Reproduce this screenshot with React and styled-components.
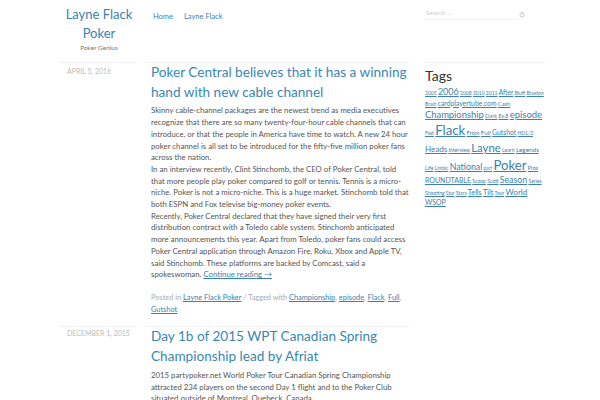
import React from 'react'
import styled, { createGlobalStyle } from 'styled-components'

const GlobalStyle = createGlobalStyle`
  body {
    margin: 0;
    background: #fff;
    font-family: Lato, "Open Sans", sans-serif;
    color: #555;
  }
  a { color: #3b80ae; }
`

const Page = styled.div`
  display: flex;
  width: 600px;
  height: 400px;
  overflow: hidden;
  padding-left: 60px;
  box-sizing: border-box;
`

const MainArea = styled.div`
  width: 350px;
  flex-shrink: 0;
  display: flex;
  flex-direction: column;
`

const Row = styled.div`
  display: flex;
  gap: 8px;
`

const SideCol = styled.div`
  width: 78px;
  flex-shrink: 0;
  box-sizing: border-box;
  border-top: ${(p) => (p.$line ? '1px solid #f1f1f1' : 'none')};
`

const ContentCol = styled.div`
  flex: 1;
  box-sizing: border-box;
  padding: 0 1px 0 5px;
  border-top: ${(p) => (p.$line ? '1px solid #f1f1f1' : 'none')};
`

const Branding = styled.div`
  height: 62px;
  text-align: center;
  padding-top: 5px;
  box-sizing: border-box;
`

const SiteTitle = styled.a`
  display: block;
  font-size: 13px;
  line-height: 19px;
  color: #3b80ae;
  text-decoration: none;
`

const Tagline = styled.div`
  font-size: 6.5px;
  line-height: 8px;
  color: #777;
  margin-top: 1px;
`

const Nav = styled.nav`
  display: flex;
  gap: 11px;
  padding-top: 12px;
  padding-left: 2px;
`

const NavLink = styled.a`
  font-size: 7.5px;
  color: #3b80ae;
  text-decoration: none;
`

const PostDate = styled.div`
  font-size: 7px;
  line-height: 8px;
  color: #bbb;
  text-transform: uppercase;
  padding-top: ${(p) => p.$top}px;
  padding-left: 7px;
`

const PostTitle = styled.h2`
  margin: 0;
  font-weight: 400;
  font-size: 13.6px;
  line-height: 19.7px;
  color: #3a86b4;
`

const Body = styled.div`
  margin-top: ${(p) => p.$top}px;
  font-size: 7.8px;
  line-height: 11.7px;
  color: #555;
  p { margin: 0; }
  a { text-decoration: underline; }
`

const Meta = styled.div`
  margin-top: 11.5px;
  padding-bottom: 11px;
  font-size: 7.4px;
  line-height: 11.5px;
  color: #aaa;
`

const Sidebar = styled.aside`
  width: 121px;
  margin-left: 15px;
  display: flex;
  flex-direction: column;
`

const SearchBox = styled.div`
  height: 62px;
  padding-top: 8px;
  box-sizing: border-box;
`

const SearchField = styled.div`
  display: flex;
  align-items: center;
  justify-content: space-between;
  width: 100px;
`

const SearchInput = styled.div`
  width: 91px;
  font-size: 6.5px;
  color: #ccc;
  padding: 1px 1px 3px;
  border-bottom: 1px solid #f0f0f0;
`

const Widget = styled.div`
  border-top: 1px solid #f1f1f1;
`

const WidgetTitle = styled.h3`
  margin: 0;
  padding-top: 4px;
  font-weight: 400;
  font-size: 14px;
  line-height: 18px;
  color: #333;
`

const TagCloud = styled.div`
  font-size: 5px;
  line-height: 1.4;
  margin-top: 1px;
`

const Tag = styled.a`
  font-size: ${(p) => p.$size}px;
  color: #3b80ae;
  text-decoration: underline;
`

const tags = [
  ['2005', 5], ['2006', 9], ['2008', 5], ['2010', 5], ['2011', 5], ['After', 6.6], ['Bluff', 5], ['Braxton', 5],
  ['Brain', 5], ['cardplayertube.com', 6.8], ['Cash', 5.8],
  ['Championship', 9.4], ['Dark', 5.8], ['Ev.8', 5.3], ['episode', 9.5],
  ['Fast', 5], ['Flack', 13.2], ['From', 5.8], ['Full', 6.4], ['Gutshot', 6.8], ['HD1/3', 5],
  ['Heads', 8], ['Interview', 5.2], ['Layne', 11.4], ['Learn', 5.2], ['Legends', 6.4],
  ['Life', 5.2], ['Limbic', 4.8], ['National', 8.8], ['part', 4.8], ['Poker', 13.2], ['Pros', 5.3],
  ['ROUNDTABLE', 7], ['Scoop', 5], ['Scott', 5], ['Season', 8.8], ['Series', 5],
  ['Shooting', 5], ['Star', 5], ['Stars', 5], ['Tells', 7.3], ['Tilt', 7.3], ['Tour', 5], ['World', 8],
  ['WSOP', 7],
]

const SearchIcon = () => (
  <svg width="6" height="7" viewBox="0 0 12 14" fill="none" stroke="#bbb" strokeWidth="1.6">
    <circle cx="6" cy="8" r="4" />
    <path d="M6 1v3" />
  </svg>
)

export default function App() {
  return (
    <>
      <GlobalStyle />
      <Page>
        <MainArea>
          <Row>
            <SideCol>
              <Branding>
                <SiteTitle href="#">Layne Flack Poker</SiteTitle>
                <Tagline>Poker Genius</Tagline>
              </Branding>
            </SideCol>
            <ContentCol>
              <Nav>
                <NavLink href="#">Home</NavLink>
                <NavLink href="#">Layne Flack</NavLink>
              </Nav>
            </ContentCol>
          </Row>

          <Row>
            <SideCol $line>
              <PostDate $top={4}>April 5, 2016</PostDate>
            </SideCol>
            <ContentCol $line>
              <PostTitle>Poker Central believes that it has a winning hand with new cable channel</PostTitle>
              <Body $top={3}>
                <p>
                  Skinny cable-channel packages are the newest trend as media executives recognize that there are so
                  many twenty-four-hour cable channels that can introduce, or that the people in America have time to
                  watch. A new 24 hour poker channel is all set to be introduced for the fifty-five million poker fans
                  across the nation.
                </p>
                <p>
                  In an interview recently, Clint Stinchomb, the CEO of Poker Central, told that more people play poker
                  compared to golf or tennis. Tennis is a micro-niche. Poker is not a micro-niche. This is a huge
                  market. Stinchomb told that both ESPN and Fox televise big-money poker events.
                </p>
                <p>
                  Recently, Poker Central declared that they have signed their very first distribution contract with a
                  Toledo cable system. Stinchomb anticipated more announcements this year. Apart from Toledo, poker fans
                  could access Poker Central application through Amazon Fire, Roku, Xbox and Apple TV, said Stinchomb.
                  These platforms are backed by Comcast, said a spokeswoman. <a href="#">Continue reading →</a>
                </p>
              </Body>
              <Meta>
                Posted in <a href="#">Layne Flack Poker</a> / Tagged with <a href="#">Championship</a>,{' '}
                <a href="#">episode</a>, <a href="#">Flack</a>, <a href="#">Full</a>, <a href="#">Gutshot</a>
              </Meta>
            </ContentCol>
          </Row>

          <Row>
            <SideCol $line>
              <PostDate $top={2}>December 1, 2015</PostDate>
            </SideCol>
            <ContentCol $line>
              <PostTitle>Day 1b of 2015 WPT Canadian Spring Championship lead by Afriat</PostTitle>
              <Body $top={3}>
                <p>
                  2015 partypoker.net World Poker Tour Canadian Spring Championship attracted 234 players on the second
                  Day 1 flight and to the Poker Club situated outside of Montreal, Quebeck, Canada.
                </p>
              </Body>
            </ContentCol>
          </Row>
        </MainArea>

        <Sidebar>
          <SearchBox>
            <SearchField>
              <SearchInput>Search …</SearchInput>
              <SearchIcon />
            </SearchField>
          </SearchBox>
          <Widget>
            <WidgetTitle>Tags</WidgetTitle>
            <TagCloud>
              {tags.map(([name, size]) => (
                <React.Fragment key={name}>
                  <Tag href="#" $size={size}>{name}</Tag>{' '}
                </React.Fragment>
              ))}
            </TagCloud>
          </Widget>
        </Sidebar>
      </Page>
    </>
  )
}
